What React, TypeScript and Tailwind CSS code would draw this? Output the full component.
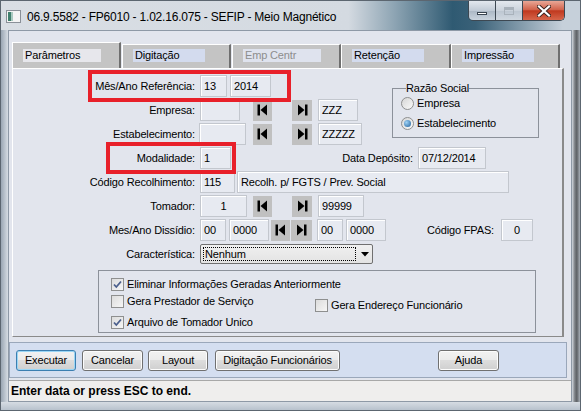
import React from 'react';

type P = { className?: string; children?: React.ReactNode };

function Input({ className = '', children }: P) {
  return (
    <div
      className={`h-[22px] flex items-center px-[3px] border border-[#c3c7ce] bg-[#e7eaf1] shadow-[inset_1px_1px_0_#ffffff] text-[11px] text-black ${className}`}
    >
      {children}
    </div>
  );
}

function Label({ className = 'w-[182px]', children }: P) {
  return <div className={`${className} shrink-0 text-right text-[11px] text-black leading-none`}>{children}</div>;
}

function NavBtn({ last = false, className = '' }: { last?: boolean; className?: string }) {
  return (
    <div className={`h-[21px] bg-[#c0c0c0] flex items-center justify-center ${className}`}>
      <svg width="11" height="12" viewBox="0 0 11 12">
        {last ? (
          <>
            <polygon points="1,0.5 1,11.5 7.5,6" fill="#000" />
            <rect x="8" y="0.5" width="2.5" height="11" fill="#000" />
          </>
        ) : (
          <>
            <rect x="0.5" y="0.5" width="2.5" height="11" fill="#000" />
            <polygon points="10,0.5 10,11.5 3.5,6" fill="#000" />
          </>
        )}
      </svg>
    </div>
  );
}

function Row({ className = '', children }: P) {
  return <div className={`flex items-center h-[22px] ${className}`}>{children}</div>;
}

function Check({ on = false }: { on?: boolean }) {
  return (
    <div className="w-[13px] h-[13px] shrink-0 border border-[#8e8f8f] bg-[linear-gradient(135deg,#dcdcdc,#f6f6f6)] flex items-center justify-center">
      {on && (
        <svg width="9" height="9" viewBox="0 0 9 9">
          <path d="M1 4.5 L3.3 7 L8 1.5" stroke="#4b5f8c" strokeWidth="1.8" fill="none" />
        </svg>
      )}
    </div>
  );
}

function Radio({ on = false }: { on?: boolean }) {
  return (
    <div className="w-[13px] h-[13px] shrink-0 rounded-full border border-[#8e8f8f] bg-[linear-gradient(135deg,#d6d6d6,#fafafa)] flex items-center justify-center">
      {on && <div className="w-[7px] h-[7px] rounded-full bg-[radial-gradient(circle_at_35%_35%,#9fd2f5,#1f5f9c)]" />}
    </div>
  );
}

function Tab({ active = false, disabled = false, className = '', children }: P & { active?: boolean; disabled?: boolean }) {
  return (
    <div
      className={`${className} shrink-0 bg-[#c4c4c4] border-t border-l border-white border-r-2 border-r-[#6f6f6f] flex pl-[10px] ${
        active ? 'h-[26px] pt-[6px]' : 'h-[24px] pt-[4px]'
      }`}
    >
      <div
        className={`h-[13px] flex items-center px-[2px] text-[11px] ${
          active ? 'w-[78px] bg-[#e7e7ec] text-black' : disabled ? 'w-[78px] bg-[#dfe3ee] text-[#8d8d8d]' : 'w-[72px] bg-[#d3dbee] text-black'
        }`}
      >
        {children}
      </div>
    </div>
  );
}

function Btn({ className = '', def = false, children }: P & { def?: boolean }) {
  return (
    <div
      className={`${className} h-[21px] shrink-0 rounded-[3px] flex items-center justify-center text-[11px] text-black bg-[linear-gradient(#f2f2f2_0%,#ebebeb_45%,#dddddd_50%,#cfcfcf_100%)] border ${
        def ? 'border-[#3c7fb1] shadow-[inset_0_0_0_1px_#9ad6f6]' : 'border-[#707070] shadow-[inset_0_0_0_1px_#fcfcfc]'
      }`}
    >
      {children}
    </div>
  );
}

export default function App() {
  return (
    <div className="w-[581px] h-[411px] overflow-hidden bg-[#c9d1da] border border-[#5c6670] font-['Liberation_Sans',Arial,sans-serif] tracking-[-0.15px] select-none">
      {/* title bar */}
      <div className="h-[29px] flex items-start bg-[linear-gradient(90deg,#d9dee4_0%,#d4dae1_60%,#8da4b3_68%,#2f5a72_78%,#3a6178_82%,#c6d0da_97%)]">
        <svg className="mt-[9px] ml-[5px]" width="15" height="13" viewBox="0 0 15 13">
          <rect x="0.5" y="0.5" width="14" height="12" fill="#f4f4f4" stroke="#8a9098" />
          <rect x="2" y="2" width="3" height="9" fill="#3f7f6d" />
          <rect x="5" y="2" width="2" height="9" fill="#a9c9bf" />
        </svg>
        <div className="ml-[6px] mt-[7px] text-[12px] text-black tracking-[-0.2px]">
          06.9.5582 - FP6010 - 1.02.16.075 - SEFIP - Meio Magnético
        </div>
        <div className="ml-auto mr-[15px] flex h-[20px] border border-t-0 border-[#3d4852] rounded-b-[5px] overflow-hidden">
          <div className="w-[27px] h-full bg-[linear-gradient(#e3e8ee,#c1cbd6_50%,#aab7c4_51%,#cad4de)] border-r border-[#3d4852] flex items-end justify-center pb-[5px]">
            <div className="w-[10px] h-[3px] bg-white border border-[#394550]" />
          </div>
          <div className="w-[27px] h-full bg-[linear-gradient(#e3e8ee,#cbd3dc_50%,#bcc6d1_51%,#d0d8e0)] border-r border-[#3d4852] flex items-center justify-center">
            <div className="w-[10px] h-[8px] border border-[#a9b2bb] shadow-[inset_0_2px_0_#a9b2bb]" />
          </div>
          <div className="w-[41px] h-full bg-[linear-gradient(#e9a796,#d2644d_45%,#c0391f_52%,#d6654a)] flex items-center justify-center">
            <svg width="14" height="12" viewBox="0 0 14 12">
              <path d="M2 1.5 L12 10.5 M12 1.5 L2 10.5" stroke="#3a2420" strokeWidth="4" strokeLinecap="square" />
              <path d="M2 1.5 L12 10.5 M12 1.5 L2 10.5" stroke="#ffffff" strokeWidth="2.2" strokeLinecap="square" />
            </svg>
          </div>
        </div>
      </div>

      <div className="flex">
        <div className="w-[7px] h-[372px] bg-[linear-gradient(90deg,#9aa6b3,#d6dce3)]" />
        {/* client area */}
        <div className="w-[564px] h-[372px] bg-[#e2e5ed] border border-[#8e99a6] flex flex-col">
          <div className="mt-[11px] ml-[3px] flex items-end">
            <Tab active className="w-[109px]">Parâmetros</Tab>
            <Tab className="w-[109px] ml-[1px]">Digitação</Tab>
            <Tab disabled className="w-[109px] ml-[1px]">Emp Centr</Tab>
            <Tab className="w-[110px]">Retenção</Tab>
            <Tab className="w-[109px]">Impressão</Tab>
          </div>

          {/* tab panel */}
          <div className="relative ml-[3px] w-[552px] h-[269px] border-l border-t border-white border-r-2 border-r-[#8a8a8a] border-b border-b-[#8a8a8a] pt-[6px]">
            <div className="flex">
              <div className="w-[379px] flex flex-col gap-[2px]">
                <Row>
                  <Label>Mês/Ano Referência:</Label>
                  <Input className="ml-[5px] w-[27px]">13</Input>
                  <Input className="ml-[3px] w-[41px]">2014</Input>
                </Row>
                <Row>
                  <Label>Empresa:</Label>
                  <Input className="ml-[5px] w-[40px]" />
                  <NavBtn className="ml-[13px] w-[19px]" />
                  <NavBtn last className="ml-[20px] w-[20px]" />
                  <Input className="ml-[6px] w-[40px]">ZZZ</Input>
                </Row>
                <Row>
                  <Label>Estabelecimento:</Label>
                  <Input className="ml-[4px] w-[47px]" />
                  <NavBtn className="ml-[7px] w-[19px]" />
                  <NavBtn last className="ml-[20px] w-[20px]" />
                  <Input className="ml-[6px] w-[44px]">ZZZZZ</Input>
                </Row>
              </div>
              <fieldset className="mt-[7px] w-[147px] h-[56px] border border-[#8c919a] pl-[8px]">
                <legend className="ml-[5px] text-[11px] leading-[13px] text-black">Razão Social</legend>
                <div className="flex items-center gap-[3px] h-[16px] text-[11px] text-black">
                  <Radio />
                  <span>Empresa</span>
                </div>
                <div className="mt-[4px] flex items-center gap-[3px] h-[16px] text-[11px] text-black">
                  <Radio on />
                  <span>Estabelecimento</span>
                </div>
              </fieldset>
            </div>

            <div className="mt-[2px] flex flex-col gap-[2px]">
              <Row>
                <Label>Modalidade:</Label>
                <Input className="ml-[5px] w-[31px]">1</Input>
                <Label className="w-[182px]">Data Depósito:</Label>
                <Input className="ml-[5px] w-[68px]">07/12/2014</Input>
              </Row>
              <Row>
                <Label>Código Recolhimento:</Label>
                <Input className="ml-[5px] w-[35px]">115</Input>
                <Input className="ml-[2px] w-[272px]">Recolh. p/ FGTS / Prev. Social</Input>
              </Row>
              <Row>
                <Label>Tomador:</Label>
                <Input className="ml-[5px] w-[47px] justify-center">1</Input>
                <NavBtn className="ml-[6px] w-[19px]" />
                <NavBtn last className="ml-[20px] w-[20px]" />
                <Input className="ml-[6px] w-[46px]">99999</Input>
              </Row>
              <Row>
                <Label>Mes/Ano Dissídio:</Label>
                <Input className="ml-[5px] w-[26px]">00</Input>
                <Input className="ml-[3px] w-[40px]">0000</Input>
                <NavBtn className="ml-[2px] w-[19px]" />
                <NavBtn last className="ml-[1px] w-[21px]" />
                <Input className="ml-[5px] w-[26px]">00</Input>
                <Input className="ml-[3px] w-[40px]">0000</Input>
                <Label className="w-[108px]">Código FPAS:</Label>
                <Input className="ml-[7px] w-[32px] justify-center">0</Input>
              </Row>
              <Row>
                <Label>Característica:</Label>
                <div className="ml-[5px] w-[173px] h-[20px] flex items-center rounded-[2px] border border-[#707070] bg-[linear-gradient(#f0f0f0,#e3e3e3)]">
                  <div className="ml-[2px] w-[153px] h-[14px] border border-dotted border-black flex items-center px-[1px] text-[11px] text-black">
                    Nenhum
                  </div>
                  <svg className="ml-[5px]" width="8" height="5" viewBox="0 0 8 5">
                    <polygon points="0,0 8,0 4,4.5" fill="#000" />
                  </svg>
                </div>
              </Row>
            </div>

            <fieldset className="mt-[5px] ml-[85px] w-[438px] h-[63px] border border-[#8c919a] pl-[12px] text-[11px] text-black">
              <div className="mt-[7px] h-[13px] flex items-center gap-[3px]">
                <Check on />
                <span>Eliminar Informações Geradas Anteriormente</span>
              </div>
              <div className="mt-[4px] flex items-start">
                <div className="w-[204px] h-[13px] flex items-center gap-[3px]">
                  <Check />
                  <span>Gera Prestador de Serviço</span>
                </div>
                <div className="mt-[4px] h-[13px] flex items-center gap-[3px]">
                  <Check />
                  <span>Gera Endereço Funcionário</span>
                </div>
              </div>
              <div className="mt-[4px] h-[13px] flex items-center gap-[3px]">
                <Check on />
                <span>Arquivo de Tomador Unico</span>
              </div>
            </fieldset>

            {/* red annotation boxes */}
            <div className="absolute left-[75px] top-[1px] w-[203px] h-[32px] border-4 border-[#e8202a]" />
            <div className="absolute left-[93px] top-[73px] w-[130px] h-[32px] border-4 border-[#e8202a]" />
          </div>

          {/* button bar */}
          <div className="mt-[5px] w-[558px] h-[36px] bg-[#d4def0] border border-[#9aa7ba] flex items-center pl-[6px]">
            <Btn def className="w-[60px]">Executar</Btn>
            <Btn className="ml-[6px] w-[61px]">Cancelar</Btn>
            <Btn className="ml-[5px] w-[60px]">Layout</Btn>
            <Btn className="ml-[7px] w-[125px]">Digitação Funcionários</Btn>
            <Btn className="ml-[98px] w-[61px]">Ajuda</Btn>
          </div>

          {/* status bar */}
          <div className="mt-[2px] flex-1 bg-[#efeeed] border-t border-[#a8a8a8] flex items-center pl-[2px] text-[12px] font-bold text-black tracking-normal">
            Enter data or press ESC to end.
          </div>
        </div>
        <div className="w-[8px] h-[372px] bg-[linear-gradient(90deg,#d2d8df,#7b7f84_35%,#5e6266_60%,#a9b0b8)]" />
      </div>
      <div className="h-[8px] bg-[linear-gradient(#d6dce3,#b8c2cd)]" />
    </div>
  );
}
